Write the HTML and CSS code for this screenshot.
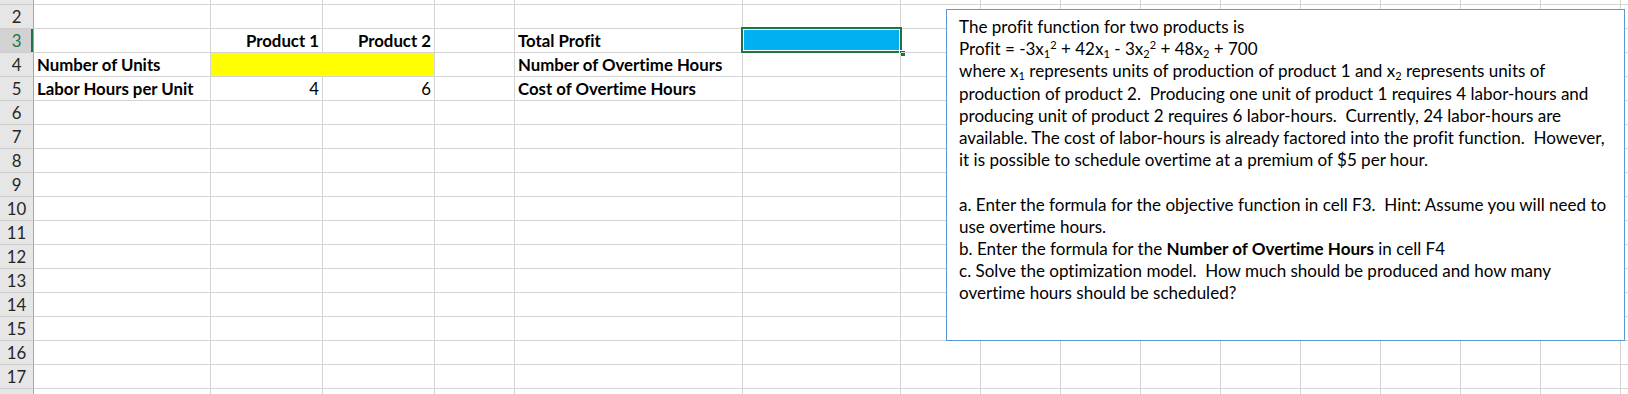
FILE: index.html
```html
<!DOCTYPE html>
<html lang="en">
<head>
    <meta charset="UTF-8">
    <title>Profit Model</title>
    <link rel="stylesheet" href="styles.css">
</head>
<body>
    <div class="page">
        <div id="sheet" class="sheet"></div>
        <div class="textBox">
            <div class="tbLine">The profit function for two products is</div>
            <div class="tbLine">Profit = -3x<sub>1</sub><sup>2</sup> + 42x<sub>1</sub> - 3x<sub>2</sub><sup>2</sup> + 48x<sub>2</sub> + 700</div>
            <div class="tbLine">where x<sub>1</sub> represents units of production of product 1 and x<sub>2</sub> represents units of</div>
            <div class="tbLine">production of product 2.  Producing one unit of product 1 requires 4 labor-hours and</div>
            <div class="tbLine">producing unit of product 2 requires 6 labor-hours.  Currently, 24 labor-hours are</div>
            <div class="tbLine">available. The cost of labor-hours is already factored into the profit function.  However,</div>
            <div class="tbLine">it is possible to schedule overtime at a premium of $5 per hour.</div>
            <div class="tbLine"> </div>
            <div class="tbLine">a. Enter the formula for the objective function in cell F3.  Hint: Assume you will need to</div>
            <div class="tbLine">use overtime hours.</div>
            <div class="tbLine">b. Enter the formula for the <b>Number of Overtime Hours</b> in cell F4</div>
            <div class="tbLine">c. Solve the optimization model.  How much should be produced and how many</div>
            <div class="tbLine">overtime hours should be scheduled?</div>
        </div>
    </div>
    <script>
        const colNames = ['A','B','C','D','E','F','G','H','I','J','K','L','M','N','O','P'];
        const cellData = {
            B3: ['Product 1', 'bold right'],
            C3: ['Product 2', 'bold right'],
            E3: ['Total Profit', 'bold'],
            F3: ['', 'fillBlue'],
            A4: ['Number of Units', 'bold'],
            B4: ['', 'fillYellow joinRight'],
            C4: ['', 'fillYellow'],
            E4: ['Number of Overtime Hours', 'bold'],
            A5: ['Labor Hours per Unit', 'bold'],
            B5: ['4', 'right'],
            C5: ['6', 'right'],
            E5: ['Cost of Overtime Hours', 'bold']
        };
        const sheet = document.getElementById('sheet');
        for (let r = 1; r <= 18; r++) {
            const head = document.createElement('div');
            head.className = 'rowHead' + (r === 3 ? ' rowHeadActive' : '');
            // rows 1 and 18 are only slivers, their numbers are out of view
            if (r > 1 && r < 18) head.textContent = r;
            sheet.appendChild(head);
            colNames.forEach((c) => {
                const cell = document.createElement('div');
                const data = cellData[c + r];
                cell.className = 'cell' + (data ? ' ' + data[1] : '');
                if (data) cell.textContent = data[0];
                if (c + r === 'F3') {
                    const frame = document.createElement('div');
                    frame.className = 'selFrame';
                    const handle = document.createElement('div');
                    handle.className = 'selHandle';
                    frame.appendChild(handle);
                    cell.appendChild(frame);
                }
                sheet.appendChild(cell);
            });
        }
    </script>
</body>
</html>
```

FILE: styles.css
```css
html, body {
    margin: 0;
    padding: 0;
    background: #fff;
    overflow: hidden;
    font-family: Lato, 'Liberation Sans', sans-serif;
    font-variant-ligatures: none;
}
div.page {
    position: relative;
    width: 1628px;
    height: 394px;
    overflow: hidden;
}
div.sheet {
    display: grid;
    grid-template-columns: 34px 177px 112px 112px 80px 228px 158px repeat(10, 80px);
    grid-template-rows: 5px repeat(17, 24px);
    width: max-content;
}
div.cell, div.rowHead {
    box-sizing: border-box;
    display: flex;
    align-items: flex-end;
    white-space: nowrap;
    font-size: 16.8px;
    line-height: 20px;
    padding: 0 3px 1px 3px;
    color: #000;
}
div.cell {
    border-right: 1px solid #d4d4d4;
    border-bottom: 1px solid #d4d4d4;
    position: relative;
}
div.rowHead {
    justify-content: center;
    background: #e6e6e6;
    border-right: 1px solid #a6a6a6;
    border-bottom: 1px solid #cdcdcd;
    color: #262626;
    overflow: hidden;
    padding: 0 0 1px 0;
}
div.rowHeadActive {
    background: #d2d2d2;
    color: #217346;
    box-shadow: inset -2px 0 0 #217346;
}
div.bold {
    font-weight: bold;
}
div.right {
    justify-content: flex-end;
}
div.fillYellow {
    background: #ffff00;
}
div.joinRight {
    border-right-color: #ffff00;
}
div.fillBlue {
    background: #00b0f0;
}
div.selFrame {
    position: absolute;
    left: -2px;
    top: -2px;
    right: -2px;
    bottom: -1px;
    border: 2px solid #217346;
    box-shadow: inset 0 0 0 1px #fff;
}
div.selHandle {
    position: absolute;
    right: -5px;
    bottom: -5px;
    width: 5px;
    height: 5px;
    background: #217346;
    border-left: 1px solid #fff;
    border-top: 1px solid #fff;
}
div.textBox {
    position: absolute;
    left: 946px;
    top: 9px;
    width: 679px;
    height: 332px;
    box-sizing: border-box;
    border: 1px solid #5b9bd5;
    background: #fff;
    padding: 6px 12px;
    font-size: 17.05px;
    line-height: 22.2px;
    color: #000;
}
div.tbLine {
    white-space: pre;
    height: 22.2px;
}
div.tbLine sub, div.tbLine sup {
    font-size: 11px;
    line-height: 0;
}
div.tbLine sub {
    vertical-align: -3px;
}
div.tbLine sup {
    vertical-align: 6px;
}
```
